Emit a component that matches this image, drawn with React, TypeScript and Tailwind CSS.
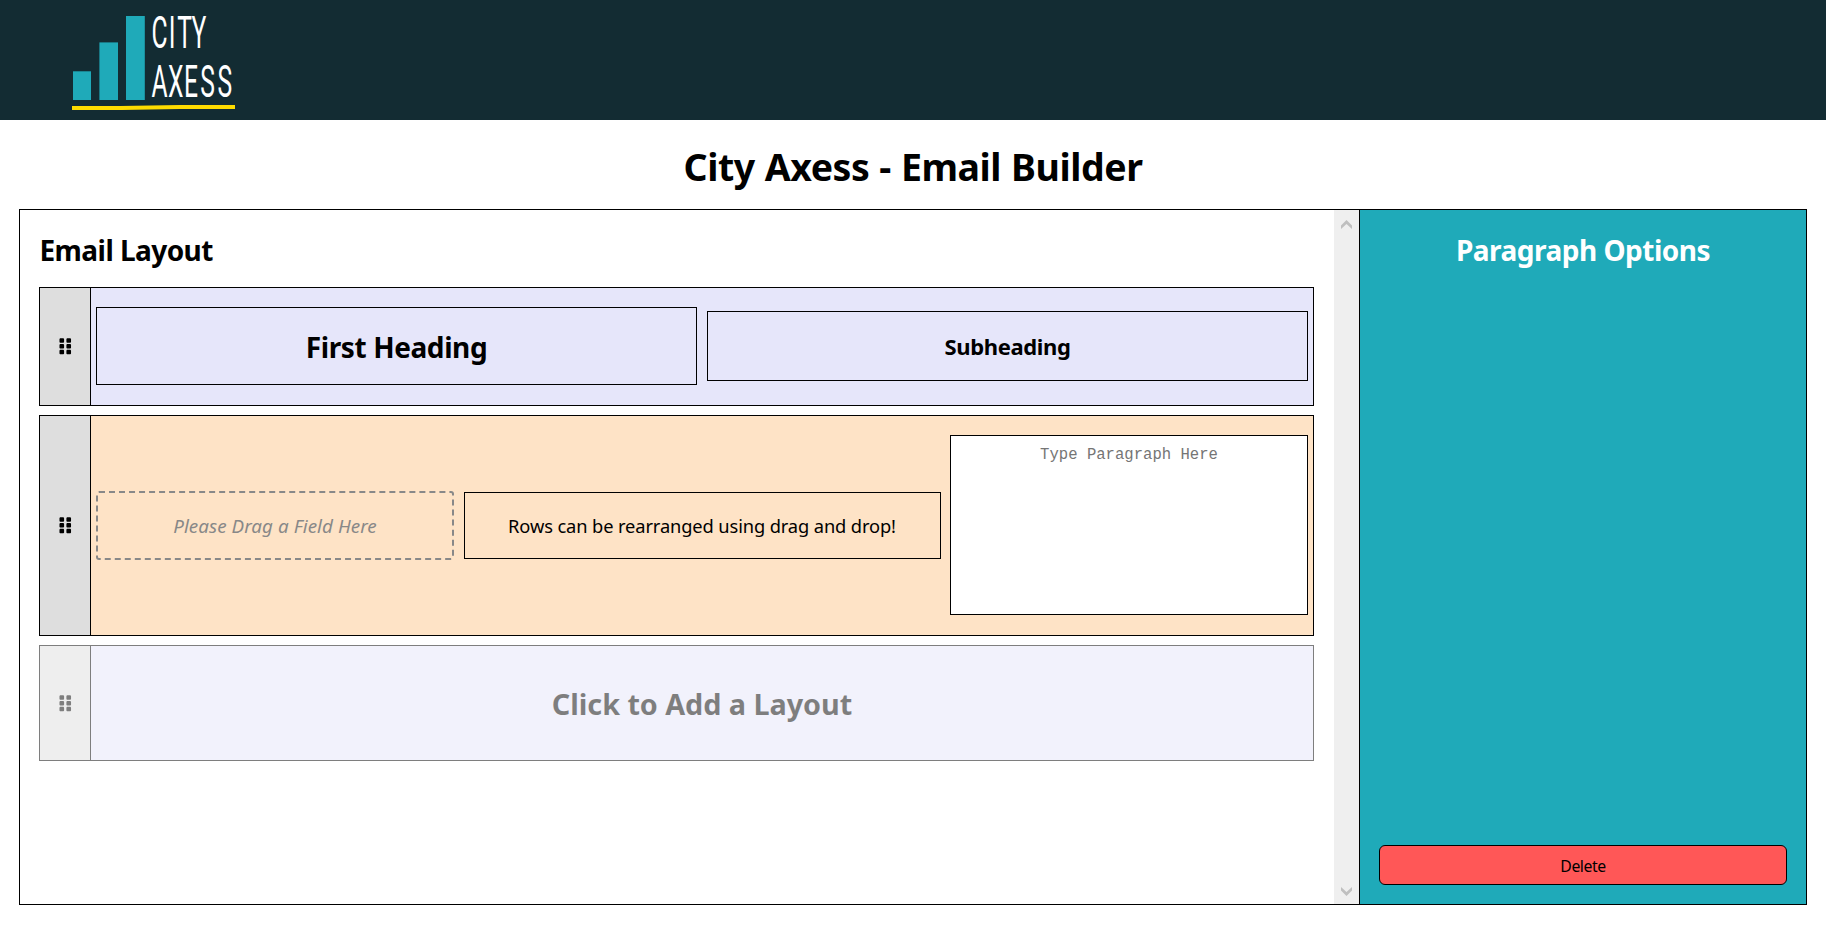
import type { ReactNode } from "react";
import { FaGripVertical } from "react-icons/fa";

function Logo() {
  return (
    <svg className="block h-[120px] w-[240px] overflow-visible" viewBox="60 0 240 120" role="img" aria-label="City Axess">
      <g fill="#1faab9">
        <rect x="73" y="71.3" width="18" height="28.7" />
        <rect x="99.4" y="42.4" width="18.6" height="57.6" />
        <rect x="126" y="16" width="18.8" height="84" />
      </g>
      <polygon points="72,106 120,106 180,105 235,105 235,109 180,109 122,110 72,110" fill="#fedc00" />
      <g fill="#ffffff" fontFamily="Roboto, sans-serif" fontWeight="400" fontSize="44">
        <text transform="translate(151.5 48) scale(0.56 1)" x="0 31 46 71.5">CITY</text>
        <text transform="translate(151.5 97) scale(0.56 1)" x="0 29.5 58 87 118">AXESS</text>
      </g>
    </svg>
  );
}

function Row({ height, faded, tone, children }: { height: string; tone: string; faded?: boolean; children: ReactNode }) {
  return (
    <div className={`flex shrink-0 border border-black ${height} ${tone} ${faded ? "opacity-50" : ""}`}>
      <div className="flex w-[51px] shrink-0 items-center justify-center border-r border-black bg-[#dedede] pl-px">
        <FaGripVertical className="size-[18.5px]" />
      </div>
      <div className="flex min-w-0 flex-1 items-center">{children}</div>
    </div>
  );
}

function Arrow({ down }: { down?: boolean }) {
  return (
    <svg className={`h-[9px] w-[11px] ${down ? "rotate-180" : ""}`} viewBox="0 0 11 9">
      <polygon points="0,5.5 5.5,0 11,5.5 11,9 5.5,4 0,9" fill="#bfbfbf" />
    </svg>
  );
}

export default function App() {
  return (
    <div className="flex h-[927px] flex-col bg-white font-['Noto_Sans',sans-serif] text-black">
      <header className="h-[120px] shrink-0 bg-[#132c33] pl-[60px]">
        <Logo />
      </header>
      <h1 className="h-[89px] shrink-0 pt-[2px] text-center text-[37.5px] leading-[89px] font-bold tracking-[-0.45px] [word-spacing:0.7px]">
        City Axess - Email Builder
      </h1>
      <main className="mx-[19px] flex h-[696px] border border-black">
        <section className="flex w-[1314px] shrink-0 flex-col gap-[9px] pt-5 pr-5 pl-[19px]">
          <h2 className="h-12 pl-[0.5px] text-[28px] leading-10 font-bold tracking-[-0.557px]">Email Layout</h2>
          <Row height="h-[119px]" tone="bg-[#e6e6fa]">
            <div className="flex w-full items-center justify-between px-[5px] pb-px">
              <div className="flex h-[78px] w-[601px] items-center justify-center border border-black pt-[2px] text-[28px] font-bold tracking-[-0.4px]">
                First Heading
              </div>
              <div className="flex h-[70px] w-[601px] items-center justify-center border border-black pt-px text-[22px] font-bold tracking-[-0.347px]">
                Subheading
              </div>
            </div>
          </Row>
          <Row height="h-[221px]" tone="bg-[#fee3c6]">
            <div className="flex w-full items-center justify-between px-[5px]">
              <div className="flex h-[69px] w-[358px] items-center justify-center rounded-[3px] border-2 border-dashed border-[#888888] pt-[2px] text-[18.8px] text-[#888888] italic tracking-[0.07px]">
                Please Drag a Field Here
              </div>
              <div className="flex h-[67px] w-[477px] items-center justify-center border border-black text-[18.3px] tracking-[-0.117px]">
                Rows can be rearranged using drag and drop!
              </div>
              <textarea
                className="mb-px block h-[180px] w-[358px] resize-none border border-black bg-white px-2 py-[10px] text-center font-['Liberation_Mono',monospace] text-[15.6px] leading-[18px] placeholder:text-[#757575]"
                placeholder="Type Paragraph Here"
              />
            </div>
          </Row>
          <Row height="h-[116px]" tone="bg-[#e6e6fa]" faded>
            <div className="w-full pt-px text-center text-[28.8px] font-bold tracking-[-0.05px]">Click to Add a Layout</div>
          </Row>
        </section>
        <div className="flex w-[25px] shrink-0 flex-col items-center justify-between bg-[#efefef] pt-[10px] pb-2">
          <Arrow />
          <Arrow down />
        </div>
        <aside className="flex flex-1 flex-col justify-between border-l border-black bg-[#1faab9] px-[19px] pt-5 pb-[19px]">
          <h2 className="text-center text-[28px] leading-10 font-bold tracking-[-0.5px] text-white">Paragraph Options</h2>
          <button className="h-10 w-full rounded-[6px] border border-black bg-[#ff5757] pt-[3px] text-[15.8px] tracking-[-0.45px]">
            Delete
          </button>
        </aside>
      </main>
    </div>
  );
}
